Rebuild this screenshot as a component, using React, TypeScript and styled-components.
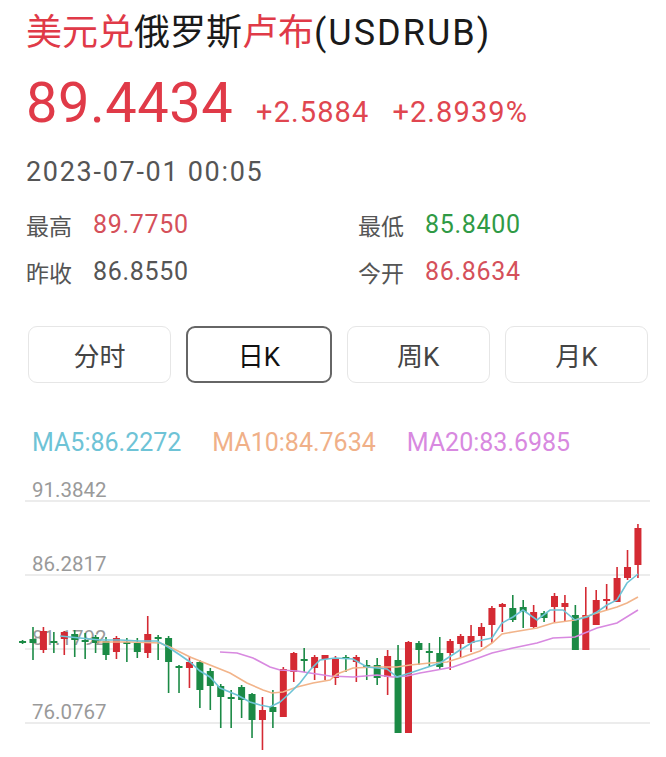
import React from 'react'
import styled, { createGlobalStyle } from 'styled-components'

const GlobalStyle = createGlobalStyle`
  html, body {
    margin: 0;
    padding: 0;
    background: #fff;
  }
`

const FONT = `Roboto, "Noto Sans CJK SC", sans-serif`

const RED = '#e03a48'
const GREEN = '#2f9a45'
const CANDLE_RED = '#d42a33'
const CANDLE_GREEN = '#1b8a45'

const Page = styled.div`
  width: 666px;
  height: 757px;
  overflow: hidden;
  box-sizing: border-box;
  padding: 11px 18px 0 26px;
  font-family: ${FONT};
  background: #fff;
`

const Title = styled.h1`
  margin: 0;
  font-size: 36px;
  line-height: 44px;
  font-weight: 400;
  color: #1a1a1a;
  white-space: nowrap;
`

const Accent = styled.span`
  color: ${RED};
`

const Code = styled.span`
  letter-spacing: 2px;
`

const PriceRow = styled.div`
  display: flex;
  align-items: baseline;
  gap: 23px;
  margin-top: 18px;
  height: 60px;
  color: ${RED};
`

const BigPrice = styled.span`
  font-size: 56px;
  line-height: 60px;
  letter-spacing: 0.5px;
`

const Change = styled.span`
  font-size: 29px;
  letter-spacing: 1.1px;
  color: #e04650;
`

const DateLine = styled.div`
  margin-top: 23px;
  font-size: 27px;
  line-height: 32px;
  letter-spacing: 1.7px;
  color: #555;
`

const Stats = styled.div`
  display: grid;
  grid-template-columns: 332px 1fr;
  margin-top: 13px;
`

const Stat = styled.div`
  display: flex;
  align-items: center;
  height: 47px;
`

const StatLabel = styled.span`
  width: 67px;
  font-size: 23px;
  color: #555;
`

const StatValue = styled.span<{ $tone: 'up' | 'down' | 'flat' }>`
  font-size: 25px;
  letter-spacing: 0.7px;
  color: ${({ $tone }) => ($tone === 'up' ? '#d5505a' : $tone === 'down' ? GREEN : '#555')};
`

const Tabs = styled.div`
  display: flex;
  gap: 15px;
  margin-top: 31px;
  padding-left: 2px;
`

const Tab = styled.button<{ $active?: boolean }>`
  flex: 1;
  height: 57px;
  box-sizing: border-box;
  background: #fff;
  border: ${({ $active }) => ($active ? '2px solid #666' : '1.5px solid #e6e6e6')};
  border-radius: 9px;
  font-family: ${FONT};
  font-size: 26px;
  color: ${({ $active }) => ($active ? '#111' : '#444')};
  cursor: pointer;
`

const Legend = styled.div`
  display: flex;
  gap: 31px;
  margin-top: 45px;
  padding-left: 6px;
  font-size: 25px;
  line-height: 30px;
`

const LegendItem = styled.span<{ $color: string }>`
  color: ${({ $color }) => $color};
`

const ChartBox = styled.div`
  margin: 20px -18px 0 -26px;
  height: 279px;
`

// candles: [bodyTop, bodyBottom, wickTop, wickBottom, up]
const candles: [number, number, number, number, boolean][] = [
  [641, 643, 640, 644, false],
  [639, 643, 627, 660, false],
  [631, 650, 627, 653, true],
  [641, 643, 632, 653, false],
  [632, 639, 631, 655, true],
  [634, 640, 630, 657, false],
  [640, 642, 633, 659, false],
  [637, 643, 635, 653, false],
  [641, 655, 637, 660, false],
  [638, 652, 636, 659, true],
  [642, 644, 638, 662, false],
  [643, 652, 638, 658, false],
  [634, 653, 616, 658, true],
  [637, 639, 635, 660, false],
  [638, 662, 636, 693, false],
  [666, 668, 665, 693, false],
  [662, 668, 656, 688, true],
  [662, 690, 660, 708, false],
  [671, 686, 668, 710, false],
  [686, 697, 684, 728, false],
  [697, 699, 690, 728, false],
  [687, 700, 685, 718, false],
  [694, 720, 693, 738, false],
  [710, 720, 697, 750, true],
  [707, 712, 690, 728, false],
  [669, 717, 667, 717, true],
  [653, 672, 652, 682, true],
  [659, 661, 648, 672, false],
  [657, 668, 655, 680, true],
  [655, 659, 655, 680, true],
  [658, 678, 656, 685, true],
  [657, 659, 655, 672, false],
  [657, 662, 655, 682, true],
  [665, 667, 660, 680, false],
  [665, 678, 658, 685, false],
  [656, 677, 650, 695, true],
  [660, 733, 645, 733, false],
  [642, 733, 641, 733, true],
  [643, 650, 641, 665, false],
  [651, 653, 643, 667, false],
  [653, 667, 637, 670, false],
  [641, 653, 639, 670, true],
  [636, 644, 634, 658, true],
  [636, 643, 625, 652, true],
  [627, 636, 623, 647, true],
  [608, 625, 606, 643, true],
  [604, 607, 603, 632, true],
  [608, 620, 595, 622, false],
  [607, 612, 600, 628, false],
  [612, 627, 605, 628, true],
  [613, 618, 611, 622, false],
  [596, 607, 593, 623, true],
  [603, 607, 595, 622, true],
  [615, 650, 605, 650, false],
  [615, 650, 587, 650, true],
  [600, 625, 590, 625, true],
  [599, 601, 584, 610, true],
  [578, 602, 567, 602, true],
  [567, 578, 550, 580, true],
  [528, 565, 524, 578, true],
]

const ma5: [number, number][] = [
  [60, 636], [80, 638], [100, 640], [120, 640], [140, 641], [157, 641], [168, 647], [180, 655],
  [190, 662], [200, 671], [210, 677], [220, 688], [237, 695], [250, 702], [260, 705], [270, 707],
  [280, 702], [290, 693], [300, 683], [310, 670], [320, 660], [335, 658], [353, 659], [367, 667],
  [387, 669], [397, 677], [410, 673], [425, 668], [440, 663], [460, 650], [473, 642], [492, 638],
  [502, 623], [513, 617], [523, 610], [537, 620], [550, 610], [563, 610], [575, 620], [587, 617],
  [597, 612], [607, 605], [617, 600], [627, 583], [638, 574],
]

const ma10: [number, number][] = [
  [97, 642], [130, 642], [160, 643], [170, 647], [190, 657], [210, 665], [230, 673], [247, 683],
  [263, 690], [272, 693], [283, 692], [297, 687], [313, 683], [330, 680], [337, 674], [353, 668],
  [377, 667], [397, 667], [410, 665], [430, 663], [447, 662], [463, 657], [480, 651], [492, 643],
  [502, 634], [513, 632], [537, 628], [553, 623], [575, 620], [597, 613], [617, 607], [627, 603],
  [638, 597],
]

const ma20: [number, number][] = [
  [220, 652], [237, 653], [253, 658], [270, 667], [280, 670], [297, 671], [310, 673], [330, 676],
  [353, 677], [377, 675], [393, 677], [407, 676], [420, 673], [437, 670], [453, 667], [473, 660],
  [492, 653], [513, 648], [537, 643], [553, 638], [575, 637], [597, 628], [617, 623], [638, 610],
]

const grid = [
  { y: 501, label: '91.3842' },
  { y: 575, label: '86.2817' },
  { y: 649, label: '81.1792' },
  { y: 723, label: '76.0767' },
]

const toPath = (pts: [number, number][]) =>
  pts.map(([x, y], i) => `${i === 0 ? 'M' : 'L'}${x} ${y}`).join(' ')

const KChart = () => (
  <svg width="666" height="279" viewBox="0 478 666 279">
    {grid.map(g => (
      <g key={g.y}>
        <line x1="25" x2="650" y1={g.y} y2={g.y} stroke="#e6e6e6" strokeWidth="1.5" />
        <text x="32" y={g.y - 4} fontFamily="Roboto, sans-serif" fontSize="20.5" fill="#9a9a9a">
          {g.label}
        </text>
      </g>
    ))}
    {candles.map(([top, bottom, high, low, up], i) => {
      const x = 33 + (i - 1) * 10.43
      const color = up ? CANDLE_RED : CANDLE_GREEN
      return (
        <g key={i}>
          <line x1={x} x2={x} y1={high} y2={low} stroke={color} strokeWidth="1.6" />
          <rect x={x - 3.5} y={top} width="7" height={Math.max(bottom - top, 2)} fill={color} />
        </g>
      )
    })}
    <path d={toPath(ma20)} fill="none" stroke="#d889e0" strokeWidth="1.6" />
    <path d={toPath(ma10)} fill="none" stroke="#f2b48a" strokeWidth="1.6" />
    <path d={toPath(ma5)} fill="none" stroke="#6ec3d6" strokeWidth="1.6" />
  </svg>
)

const App = () => {
  return (
    <Page>
      <GlobalStyle />
      <Title>
        <Accent>美元兑</Accent>俄罗斯<Accent>卢布</Accent><Code>(USDRUB)</Code>
      </Title>

      <PriceRow>
        <BigPrice>89.4434</BigPrice>
        <Change>+2.5884</Change>
        <Change>+2.8939%</Change>
      </PriceRow>

      <DateLine>2023-07-01 00:05</DateLine>

      <Stats>
        <Stat>
          <StatLabel>最高</StatLabel>
          <StatValue $tone="up">89.7750</StatValue>
        </Stat>
        <Stat>
          <StatLabel>最低</StatLabel>
          <StatValue $tone="down">85.8400</StatValue>
        </Stat>
        <Stat>
          <StatLabel>昨收</StatLabel>
          <StatValue $tone="flat">86.8550</StatValue>
        </Stat>
        <Stat>
          <StatLabel>今开</StatLabel>
          <StatValue $tone="up">86.8634</StatValue>
        </Stat>
      </Stats>

      <Tabs>
        <Tab>分时</Tab>
        <Tab $active>日K</Tab>
        <Tab>周K</Tab>
        <Tab>月K</Tab>
      </Tabs>

      <Legend>
        <LegendItem $color="#6ec3d6">MA5:86.2272</LegendItem>
        <LegendItem $color="#f0b088">MA10:84.7634</LegendItem>
        <LegendItem $color="#d889e0">MA20:83.6985</LegendItem>
      </Legend>

      <ChartBox>
        <KChart />
      </ChartBox>
    </Page>
  )
}

export default App
